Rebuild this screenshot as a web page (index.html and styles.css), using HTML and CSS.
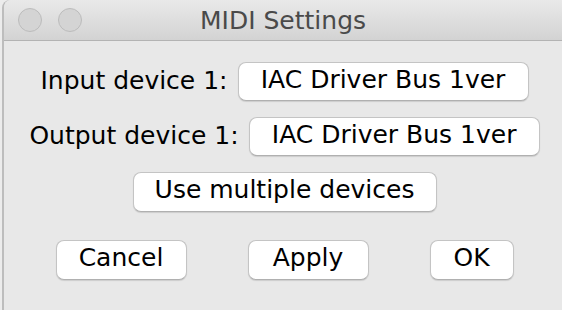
FILE: index.html
```html
<!DOCTYPE html>
<html>
<head>
<meta charset="utf-8">
<link rel="stylesheet" href="styles.css">
</head>
<body>
<div class="window">
  <div class="titlebar">
    <div class="lights">
      <span class="light"></span>
      <span class="light"></span>
    </div>
    <div class="title">MIDI Settings</div>
  </div>
  <div class="content">
    <div class="row">
      <span class="label">Input device 1:</span>
      <button class="btn device">IAC Driver Bus 1ver</button>
    </div>
    <div class="row">
      <span class="label">Output device 1:</span>
      <button class="btn device">IAC Driver Bus 1ver</button>
    </div>
    <div class="row multi-row">
      <button class="btn multi">Use multiple devices</button>
    </div>
    <div class="actions">
      <button class="btn cancel">Cancel</button>
      <button class="btn apply">Apply</button>
      <button class="btn ok">OK</button>
    </div>
  </div>
</div>
</body>
</html>
```
FILE: styles.css
```css
html, body {
  margin: 0;
  padding: 0;
  width: 562px;
  height: 310px;
  overflow: hidden;
  background: #ececec;
}
body {
  font-family: "DejaVu Sans", Verdana, sans-serif;
  color: #000;
}
.window {
  margin-left: 2px;
  height: 310px;
  border-left: 2px solid #bdbdbd;
  border-top-left-radius: 8px;
  background: #e8e8e8;
  display: flex;
  flex-direction: column;
}
.titlebar {
  height: 40px;
  border-bottom: 1px solid #b3b3b3;
  background: linear-gradient(#e9e9e9, #d3d3d3);
  border-top-left-radius: 8px;
  position: relative;
  display: flex;
  align-items: center;
}
.lights {
  display: flex;
  gap: 16px;
  padding-left: 14px;
}
.light {
  width: 22px;
  height: 22px;
  border-radius: 50%;
  border: 1px solid #bcbcbc;
  background: #d4d4d4;
}
.title {
  position: absolute;
  left: 0;
  right: 0;
  top: 0;
  bottom: 0;
  display: flex;
  align-items: center;
  justify-content: center;
  padding-left: 0;
  font-size: 25px;
  color: #4a4a4a;
}
.content {
  padding: 21px 0 0 3px;
  display: flex;
  flex-direction: column;
  align-items: center;
}
.row {
  display: flex;
  align-items: center;
  gap: 10px;
  margin-bottom: 16px;
}
.label {
  font-size: 25px;
  padding-bottom: 3px;
}
.btn {
  font-family: "DejaVu Sans", Verdana, sans-serif;
  font-size: 25px;
  color: #000;
  background: #fff;
  border: 1px solid #c4c4c4;
  border-bottom-color: #b0b0b0;
  border-radius: 8px;
  box-shadow: 0 1px 1px rgba(0,0,0,0.12);
  height: 39px;
  padding: 0 0 5px 0;
  margin: 0;
  display: flex;
  align-items: center;
  justify-content: center;
}
.device { width: 291px; }
.multi { width: 304px; height: 40px; }
.multi-row { margin-bottom: 28px; margin-top: 0; }
.actions {
  display: flex;
  gap: 61px;
}
.actions .btn { height: 40px; }
.cancel { width: 131px; }
.apply { width: 121px; }
.ok { width: 84px; }
```
